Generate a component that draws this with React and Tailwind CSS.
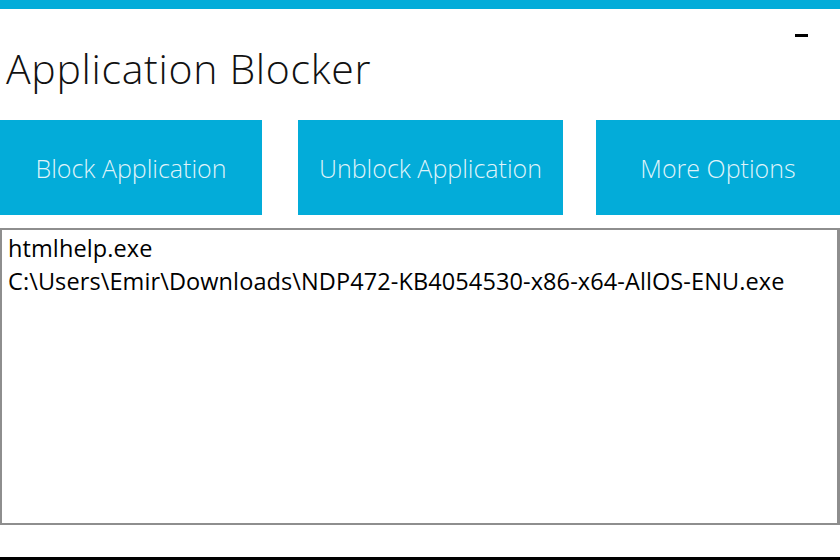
import React from "react";

const buttons = [
  { label: "Block Application", w: "w-[262px]" },
  { label: "Unblock Application", w: "w-[265px]" },
  { label: "More Options", w: "w-[244px]" },
];

const items = [
  "htmlhelp.exe",
  "C:\\Users\\Emir\\Downloads\\NDP472-KB4054530-x86-x64-AllOS-ENU.exe",
];

export default function App() {
  return (
    <div
      className="w-[840px] h-[560px] bg-white flex flex-col overflow-hidden"
      style={{ fontFamily: '"Open Sans", "Noto Sans", sans-serif' }}
    >
      <div className="h-[9px] bg-[#03acd9]" />

      {/* header */}
      <div className="h-[111px] flex justify-between items-start">
        <h1 className="pl-[6px] pt-[39px] text-[41px] font-light leading-none text-[#111] tracking-[0.7px]">
          Application Blocker
        </h1>
        <div className="mt-[25px] mr-[32px] w-[13px] h-[3px] bg-black" />
      </div>

      {/* buttons */}
      <div className="flex gap-[36px] h-[95px]">
        {buttons.map((b, i) => (
          <button
            key={b.label}
            className={`${b.w} ${i === 2 ? "ml-[-3px]" : ""} h-full bg-[#03acd9] text-[#dff3fa] text-[25px] font-light pt-[3px]`}
          >
            {b.label}
          </button>
        ))}
      </div>

      {/* list */}
      <div className="mt-[13px] w-[840px] h-[297px] border-2 border-[#8e8e8e] border-r-[3px] bg-white pl-[6px] pt-[2px]">
        {items.map((it) => (
          <div key={it} className="text-[23.5px] leading-[33px] tracking-[0.1px] text-black">
            {it}
          </div>
        ))}
      </div>

      <div className="flex-1" />
      <div className="h-[3px] bg-black" />
    </div>
  );
}
